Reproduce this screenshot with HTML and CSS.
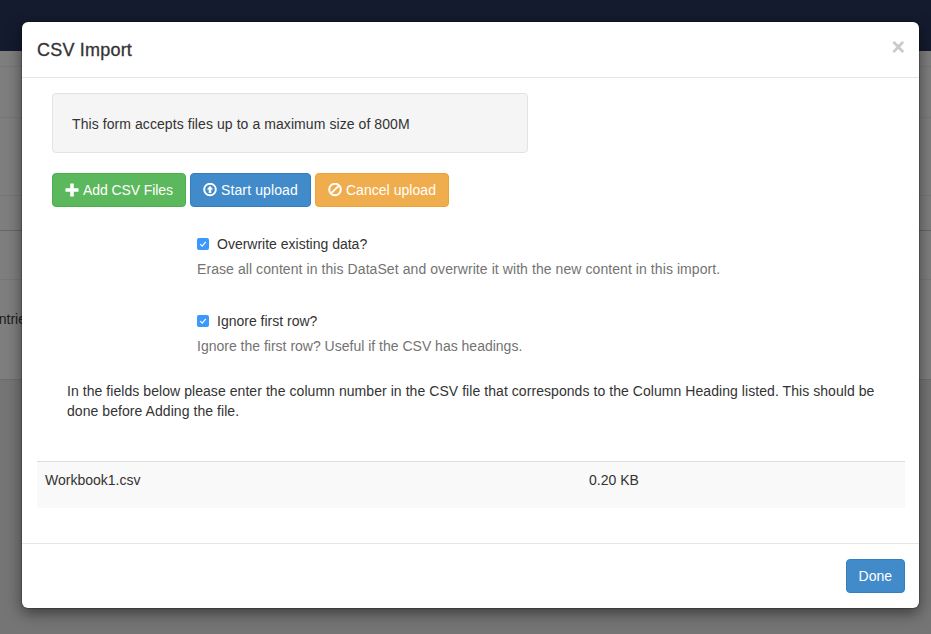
FILE: index.html
```html
<!DOCTYPE html>
<html lang="en">
<head>
<meta charset="utf-8">
<title>CSV Import</title>
<link rel="stylesheet" href="styles.css">
</head>
<body>
<div class="page">
  <header class="navbar"></header>
  <div class="backdrop-rows">
    <div class="bg-row bg-row-a"></div>
    <div class="bg-row bg-row-b"></div>
    <div class="bg-row bg-row-c"></div>
    <div class="bg-row bg-row-d"></div>
    <div class="bg-row bg-row-e"></div>
    <div class="bg-row bg-row-f"><span class="bg-text">entries</span></div>
  </div>
</div>
<div class="modal">
  <div class="modal-header">
    <h4 class="modal-title">CSV Import</h4>
    <span class="close">×</span>
  </div>
  <div class="modal-body">
    <div class="well wide">This form accepts files up to a maximum size of 800M</div>
    <div class="buttons">
      <button class="btn btn-green"><svg class="icon" viewBox="0 0 14 14"><path d="M5.2.5h3.6v4.7h4.7v3.6H8.8v4.7H5.2V8.8H.5V5.2h4.7z" fill="#fff"/></svg>Add CSV Files</button>
      <button class="btn btn-blue"><svg class="icon" viewBox="0 0 14 14"><circle cx="7" cy="6.5" r="5.8" fill="none" stroke="#fff" stroke-width="1.9"/><path d="M7 2.7 10.2 6.4H8.3V9.9H5.7V6.4H3.8z" fill="#fff"/></svg>Start upload</button>
      <button class="btn btn-orange"><svg class="icon" viewBox="0 0 14 14"><circle cx="7" cy="6.5" r="5.8" fill="none" stroke="#fff" stroke-width="2"/><path d="M3.1 10.4 10.9 2.6" stroke="#fff" stroke-width="2"/></svg>Cancel upload</button>
    </div>
    <div class="option option-first">
      <label class="check-label"><span class="check"><svg viewBox="0 0 12 12"><path d="M3.2 6.2 5.2 8.2 8.8 3.9" fill="none" stroke="#fff" stroke-width="1.2"/></svg></span>Overwrite existing data?</label>
      <p class="help wide">Erase all content in this DataSet and overwrite it with the new content in this import.</p>
    </div>
    <div class="option">
      <label class="check-label"><span class="check"><svg viewBox="0 0 12 12"><path d="M3.2 6.2 5.2 8.2 8.8 3.9" fill="none" stroke="#fff" stroke-width="1.2"/></svg></span>Ignore first row?</label>
      <p class="help">Ignore the first row? Useful if the CSV has headings.</p>
    </div>
    <p class="intro">In the fields below please enter the column number in the CSV file that corresponds to the Column Heading listed. This should be done before Adding the file.</p>
    <div class="file-row">
      <span class="file-name">Workbook1.csv</span>
      <span class="file-size">0.20 KB</span>
    </div>
  </div>
  <div class="modal-footer">
    <button class="btn btn-blue btn-done">Done</button>
  </div>
</div>
</body>
</html>
```
FILE: styles.css
```css
* { box-sizing: border-box; }
html, body { margin: 0; height: 100%; }
body {
  background: #757575;
  font-family: "Liberation Sans", Arial, sans-serif;
  font-size: 14px;
  color: #333;
  overflow: hidden;
  position: relative;
}
.page { height: 634px; }
.navbar { height: 51px; background: #141b2e; }
.backdrop-rows { background: #7e7e7e; }
.bg-row { border-bottom: 1px solid #777; }
.bg-row-a { height: 16px; }
.bg-row-b { height: 51px; }
.bg-row-c { height: 78px; }
.bg-row-d { height: 35px; border-bottom-color: #666; }
.bg-row-e { height: 49px; }
.bg-row-f { height: 100px; padding-top: 31px; border-bottom-color: #6c6c6c; }
.bg-text { display: block; margin-left: -9px; color: #1c1c1c; }
.modal {
  position: absolute;
  left: 22px;
  top: 22px;
  width: 897px;
  height: 586px;
  background: #fff;
  border-radius: 6px;
  box-shadow: 0 0 0 1px rgba(0,0,0,.2), 0 5px 15px rgba(0,0,0,.5);
  display: flex;
  flex-direction: column;
}
.modal-header {
  height: 56px;
  border-bottom: 1px solid #e5e5e5;
  padding: 0 14px 0 15px;
  display: flex;
  align-items: center;
  justify-content: space-between;
}
.modal-title {
  margin: 2px 0 0;
  font-size: 18px;
  font-weight: 500;
  letter-spacing: .2px;
  -webkit-text-stroke: .3px #333;
  color: #333;
}
.close { margin: 0 0 5px 0; font-size: 23px; font-weight: 700; color: #c9c9c9; }
.modal-body { flex: 1; padding: 15px 14px 15px 15px; }
.wide { letter-spacing: .075px; }
.well {
  margin-left: 15px;
  width: 476px;
  height: 60px;
  padding: 2px 19px 0;
  display: flex;
  align-items: center;
  background: #f5f5f5;
  border: 1px solid #e3e3e3;
  border-radius: 4px;
}
.buttons { margin: 20px 0 0 15px; display: flex; gap: 4px; }
.btn {
  height: 34px;
  padding: 0 12px;
  border: 1px solid transparent;
  border-radius: 4px;
  font: 14px "Liberation Sans", Arial, sans-serif;
  color: #fff;
  display: inline-flex;
  align-items: center;
}
.icon { width: 14px; height: 14px; margin-right: 4px; }
.btn-green { background: #5cb85c; border-color: #4cae4c; letter-spacing: -.08px; }
.btn-blue { background: #428bca; border-color: #357ebd; letter-spacing: .12px; }
.btn-orange { background: #f0ad4e; border-color: #eea236; letter-spacing: .04px; }
.option { margin-left: 160px; }
.option-first { margin-top: 27px; }
.option + .option { margin-top: 32px; }
.check-label { display: flex; align-items: center; height: 20px; }
.check {
  width: 12px;
  height: 12px;
  margin-right: 8px;
  background: #3b99fc;
  border-radius: 2px;
  display: block;
}
.check svg { display: block; }
.help { margin: 5px 0 0; color: #737373; line-height: 20px; }
.intro { margin: 25px 15px 0 30px; line-height: 20px; letter-spacing: .06px; }
.file-row {
  margin-top: 40px;
  height: 47px;
  padding: 8px;
  background: #f9f9f9;
  border-top: 1px solid #ddd;
  display: flex;
  line-height: 20px;
}
.file-name { width: 544px; }
.modal-footer {
  height: 65px;
  border-top: 1px solid #e5e5e5;
  padding: 15px 14px 15px 15px;
  display: flex;
  justify-content: flex-end;
}
.btn-done { height: 34px; letter-spacing: 0; }
```
